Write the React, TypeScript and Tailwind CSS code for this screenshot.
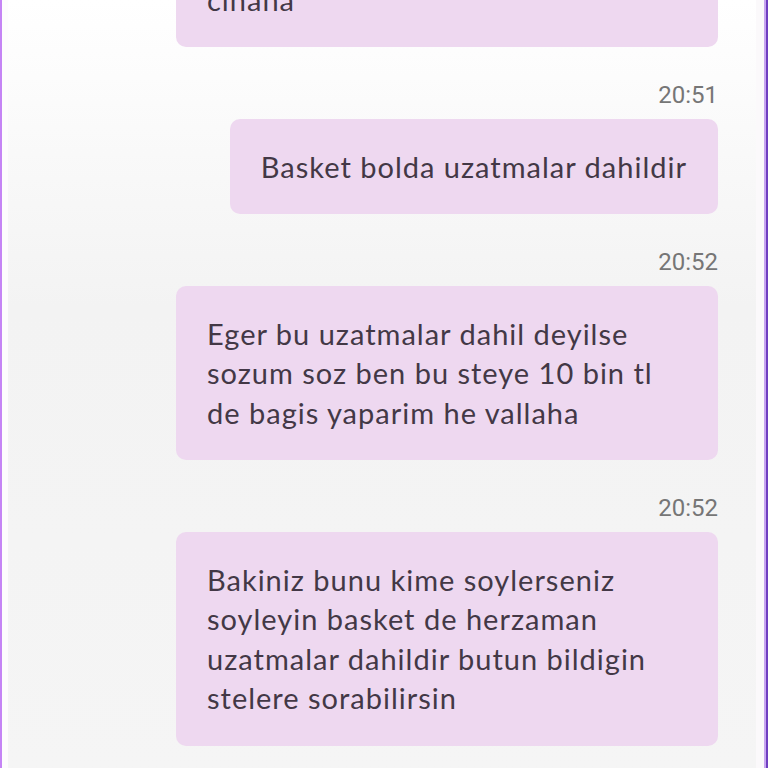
import React from "react";

const msgFont = { fontFamily: "Lato, 'Noto Sans', sans-serif" } as const;
const timeFont = { fontFamily: "Roboto, 'Noto Sans', sans-serif" } as const;

function Time({ t }: { t: string }) {
  return (
    <div
      className="self-end mt-[35.5px] mb-[12px] h-[24px] leading-[24px] text-[24px] text-[#767676]"
      style={timeFont}
    >
      {t}
    </div>
  );
}

function Bubble({ lines, wide = true }: { lines: string[]; wide?: boolean }) {
  return (
    <div
      className={`self-end rounded-[10px] bg-[#eed8f0] px-[31px] py-[28px] text-[29px] leading-[39.5px] tracking-[1px] text-[#433846] ${
        wide ? "w-[542px]" : ""
      }`}
      style={msgFont}
    >
      {lines.map((l, i) => (
        <div key={i} className="whitespace-nowrap">
          {l}
        </div>
      ))}
    </div>
  );
}

export default function App() {
  return (
    <div className="relative h-[768px] w-[768px] overflow-hidden bg-gradient-to-b from-[#ffffff] via-[#f3f3f3] via-40% to-[#f5f5f5]">
      <div className="flex flex-col pr-[50px] mt-[-48.5px]">
        <Bubble lines={["cinana"]} />
        <Time t="20:51" />
        <Bubble lines={["Basket bolda uzatmalar dahildir"]} wide={false} />
        <Time t="20:52" />
        <Bubble
          lines={[
            "Eger bu uzatmalar dahil deyilse",
            "sozum soz ben bu steye 10 bin tl",
            "de bagis yaparim he vallaha",
          ]}
        />
        <Time t="20:52" />
        <Bubble
          lines={[
            "Bakiniz bunu kime soylerseniz",
            "soyleyin basket de herzaman",
            "uzatmalar dahildir butun bildigin",
            "stelere sorabilirsin",
          ]}
        />
      </div>
      <div className="absolute left-0 top-0 h-full w-[2px] bg-[#c584f5]" />
      <div className="absolute left-[2px] top-0 h-full w-[6px] bg-[#fdfcfd]" />
      <div className="absolute right-[2px] top-0 h-full w-[2px] bg-[#c8a6f0]" />
      <div className="absolute right-0 top-0 h-full w-[2px] bg-[#6f3fc0]" />
      <div className="absolute right-[4px] top-0 h-full w-[8px] bg-[#fbf9fb]" />
    </div>
  );
}
